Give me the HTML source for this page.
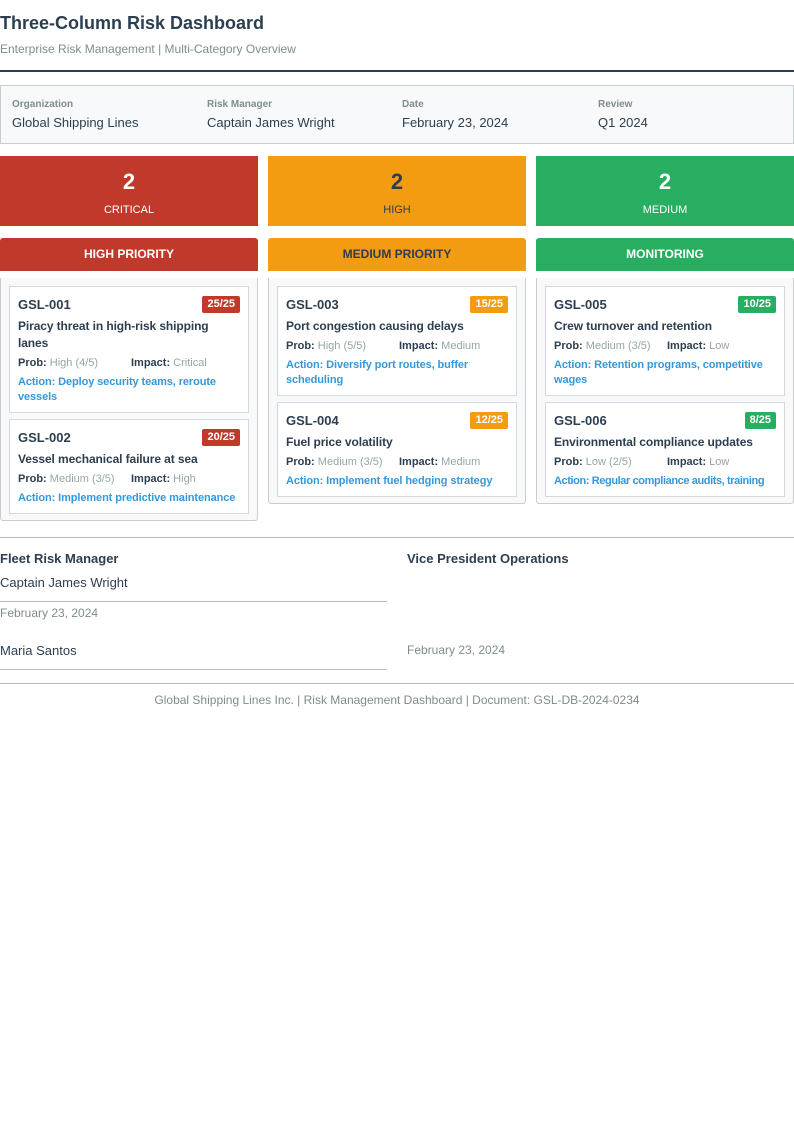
<!DOCTYPE html>
<html><head><meta charset="utf-8"><style>
*{margin:0;padding:0;box-sizing:border-box}
body{width:794px;height:1123px;background:#fff;font-family:"Liberation Sans",Arial,sans-serif;color:#2c3e50;position:relative}
.abs{position:absolute}
h1{position:absolute;left:0;top:13px;font-size:18px;font-weight:bold;color:#2c3e50}
.sub{left:0;top:42px;font-size:12px;color:#7f8c8d}
.hr{left:0;top:70px;width:794px;height:2px;background:#2c3e50}
.info{left:0;top:85px;width:794px;height:59px;background:#f8f9fa;border:1px solid #c8cdd0}
.info div{position:absolute;top:13px}
.info .l{font-size:10px;font-weight:bold;color:#7f8c8d}
.info .v{font-size:13px;color:#2c3e50;margin-top:5px}
.sum{top:156px;width:258px;height:70px;text-align:center}
.sum .n{font-size:22px;font-weight:bold;margin-top:14px;line-height:24px}
.sum .t{font-size:11px;margin-top:10px}
.ph{top:238px;width:258px;height:33px;border-radius:3px 3px 0 0;text-align:center;font-size:12px;font-weight:bold;line-height:32px}
.col{top:278px;width:258px;border:1px solid #ccc;border-top:none;background:#f8f9fa;border-radius:0 0 3px 3px;padding:8px 8px 6px}
.card{background:#fff;border:1px solid #d5d8dc;padding:8px 8px 7px 8px;margin-bottom:6px;position:relative}
.card:last-child{margin-bottom:0}
.id{font-size:13px;font-weight:bold;line-height:17px;margin-top:1px}
.badge{position:absolute;right:8px;top:9px;height:17px;padding:0 5px;color:#fff;font-size:11px;font-weight:bold;line-height:17px;border-radius:2px}
.tt{font-size:12px;font-weight:bold;line-height:17px;margin-top:5px;letter-spacing:-0.1px}
.m{font-size:11px;margin-top:4px;line-height:14px;color:#95a5a6}
.m b{color:#2c3e50}
.m span{display:inline-block;width:113px}
.a{font-size:11px;font-weight:bold;color:#3498db;line-height:15px;margin-top:5px;letter-spacing:-0.1px}
.red{background:#c0392b;color:#fff}.org{background:#f39c12;color:#2c3e50}.grn{background:#27ae60;color:#fff}
.line{height:1px;background:#bbb}
</style></head><body>
<h1>Three-Column Risk Dashboard</h1>
<div class="abs sub">Enterprise Risk Management | Multi-Category Overview</div>
<div class="abs hr"></div>
<div class="abs info">
<div style="left:11px"><div class="l" style="position:static">Organization</div><div class="v" style="position:static">Global Shipping Lines</div></div>
<div style="left:206px"><div class="l" style="position:static">Risk Manager</div><div class="v" style="position:static">Captain James Wright</div></div>
<div style="left:401px"><div class="l" style="position:static">Date</div><div class="v" style="position:static">February 23, 2024</div></div>
<div style="left:597px"><div class="l" style="position:static">Review</div><div class="v" style="position:static">Q1 2024</div></div>
</div>
<div class="abs sum red" style="left:0"><div class="n">2</div><div class="t">CRITICAL</div></div>
<div class="abs sum org" style="left:268px"><div class="n">2</div><div class="t">HIGH</div></div>
<div class="abs sum grn" style="left:536px"><div class="n">2</div><div class="t">MEDIUM</div></div>
<div class="abs ph red" style="left:0">HIGH PRIORITY</div>
<div class="abs ph org" style="left:268px">MEDIUM PRIORITY</div>
<div class="abs ph grn" style="left:536px">MONITORING</div>

<div class="abs col" style="left:0">
<div class="card"><div class="id">GSL-001</div><div class="badge red">25/25</div><div class="tt">Piracy threat in high-risk shipping lanes</div><div class="m"><span><b>Prob:</b> High (4/5)</span><b>Impact:</b> Critical</div><div class="a">Action: Deploy security teams, reroute vessels</div></div>
<div class="card"><div class="id">GSL-002</div><div class="badge red">20/25</div><div class="tt">Vessel mechanical failure at sea</div><div class="m"><span><b>Prob:</b> Medium (3/5)</span><b>Impact:</b> High</div><div class="a">Action: Implement predictive maintenance</div></div>
</div>
<div class="abs col" style="left:268px">
<div class="card"><div class="id">GSL-003</div><div class="badge org" style="color:#fff">15/25</div><div class="tt">Port congestion causing delays</div><div class="m"><span><b>Prob:</b> High (5/5)</span><b>Impact:</b> Medium</div><div class="a">Action: Diversify port routes, buffer scheduling</div></div>
<div class="card"><div class="id">GSL-004</div><div class="badge org" style="color:#fff">12/25</div><div class="tt">Fuel price volatility</div><div class="m"><span><b>Prob:</b> Medium (3/5)</span><b>Impact:</b> Medium</div><div class="a">Action: Implement fuel hedging strategy</div></div>
</div>
<div class="abs col" style="left:536px">
<div class="card"><div class="id">GSL-005</div><div class="badge grn">10/25</div><div class="tt">Crew turnover and retention</div><div class="m"><span><b>Prob:</b> Medium (3/5)</span><b>Impact:</b> Low</div><div class="a">Action: Retention programs, competitive wages</div></div>
<div class="card"><div class="id">GSL-006</div><div class="badge grn">8/25</div><div class="tt">Environmental compliance updates</div><div class="m"><span><b>Prob:</b> Low (2/5)</span><b>Impact:</b> Low</div><div class="a" style="white-space:nowrap;letter-spacing:-0.4px">Action: Regular compliance audits, training</div></div>
</div>

<div class="abs line" style="left:0;top:537px;width:794px"></div>
<div class="abs" style="left:0;top:551px;font-size:13px;font-weight:bold">Fleet Risk Manager</div>
<div class="abs" style="left:407px;top:551px;font-size:13px;font-weight:bold">Vice President Operations</div>
<div class="abs" style="left:0;top:575px;font-size:13px">Captain James Wright</div>
<div class="abs line" style="left:0;top:601px;width:387px"></div>
<div class="abs" style="left:0;top:606px;font-size:12px;color:#7f8c8d">February 23, 2024</div>
<div class="abs" style="left:0;top:643px;font-size:13px">Maria Santos</div>
<div class="abs" style="left:407px;top:643px;font-size:12px;color:#7f8c8d">February 23, 2024</div>
<div class="abs line" style="left:0;top:669px;width:387px"></div>
<div class="abs line" style="left:0;top:683px;width:794px"></div>
<div class="abs" style="left:0;top:693px;width:794px;text-align:center;font-size:12px;color:#7f8c8d">Global Shipping Lines Inc. | Risk Management Dashboard | Document: GSL-DB-2024-0234</div>
</body></html>
